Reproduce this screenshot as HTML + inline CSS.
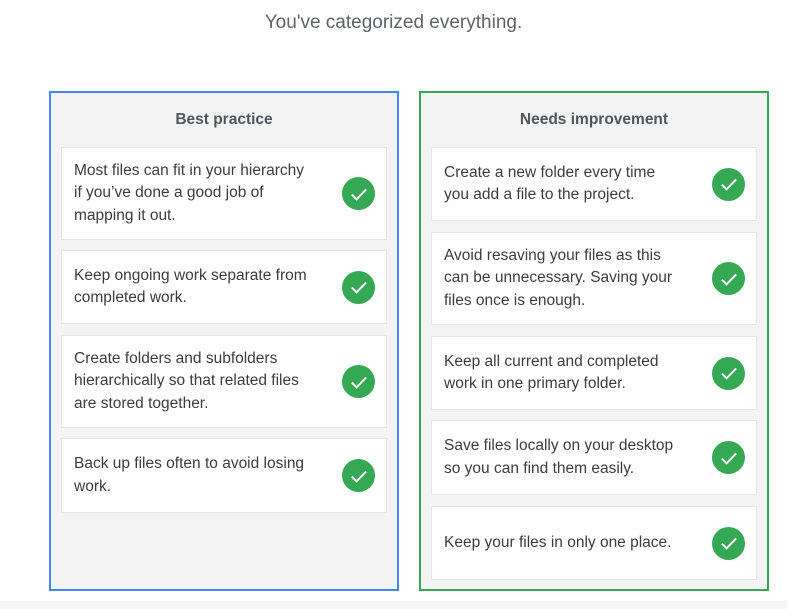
<!DOCTYPE html>
<html><head><style>
body{margin:0;width:787px;height:609px;background:#fff;font-family:"Liberation Sans",Arial,sans-serif;position:relative;overflow:hidden}
.t{position:absolute;top:12px;left:0;width:787px;text-align:center;font-size:19px;color:#5f6368}
.box{position:absolute;top:91px;width:346px;height:496px;background:#f3f3f3;border:2px solid #4285f4}
.h{position:absolute;top:18px;width:100%;text-align:center;font-weight:bold;font-size:15.5px;color:#4f565c}
.c{position:absolute;left:10px;width:326px;background:#fff;border:1px solid #e6e6e6;box-sizing:border-box;display:flex;align-items:center;padding:0 0 0 12px;font-size:15.5px;line-height:22.5px;color:#3c3c3c}
.c span{flex:1;padding-right:10px;white-space:nowrap}
.k{width:33px;height:33px;border-radius:50%;background:#34a853;margin-right:11px;flex:none;display:flex;align-items:center;justify-content:center}
.bot{position:absolute;left:0;top:601px;width:787px;height:8px;background:#f6f6f6}
</style></head><body>
<div class="t">You've categorized everything.</div>
<svg width="0" height="0" style="position:absolute"><defs><symbol id="ck" viewBox="0 0 20 20"><path d="M3.5 10.5l4.3 4.3 8.7-9" fill="none" stroke="#fff" stroke-width="1.8"/></symbol></defs></svg>
<div class="box" style="left:49px">
<div class="h">Best practice</div>
<div class="c" style="top:54px;height:93px"><span>Most files can fit in your hierarchy<br>if you’ve done a good job of<br>mapping it out.</span><div class="k"><svg width="22" height="22"><use href="#ck"/></svg></div></div>
<div class="c" style="top:157px;height:74px"><span>Keep ongoing work separate from<br>completed work.</span><div class="k"><svg width="22" height="22"><use href="#ck"/></svg></div></div>
<div class="c" style="top:242px;height:93px"><span>Create folders and subfolders<br>hierarchically so that related files<br>are stored together.</span><div class="k"><svg width="22" height="22"><use href="#ck"/></svg></div></div>
<div class="c" style="top:345px;height:75px"><span>Back up files often to avoid losing<br>work.</span><div class="k"><svg width="22" height="22"><use href="#ck"/></svg></div></div>
</div>
<div class="box" style="left:419px;border-color:#34a853">
<div class="h">Needs improvement</div>
<div class="c" style="top:54px;height:74px"><span>Create a new folder every time<br>you add a file to the project.</span><div class="k"><svg width="22" height="22"><use href="#ck"/></svg></div></div>
<div class="c" style="top:139px;height:93px"><span>Avoid resaving your files as this<br>can be unnecessary. Saving your<br>files once is enough.</span><div class="k"><svg width="22" height="22"><use href="#ck"/></svg></div></div>
<div class="c" style="top:243px;height:74px"><span>Keep all current and completed<br>work in one primary folder.</span><div class="k"><svg width="22" height="22"><use href="#ck"/></svg></div></div>
<div class="c" style="top:327px;height:75px"><span>Save files locally on your desktop<br>so you can find them easily.</span><div class="k"><svg width="22" height="22"><use href="#ck"/></svg></div></div>
<div class="c" style="top:413px;height:74px"><span>Keep your files in only one place.</span><div class="k"><svg width="22" height="22"><use href="#ck"/></svg></div></div>
</div>
<div class="bot"></div>
</body></html>
